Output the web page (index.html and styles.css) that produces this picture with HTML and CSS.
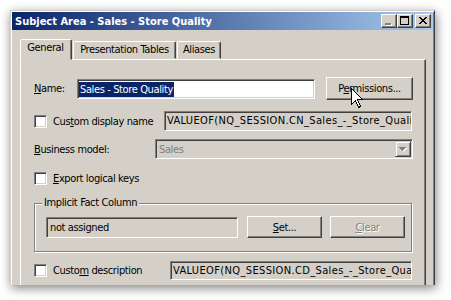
FILE: index.html
```html
<!DOCTYPE html>
<html lang="en">
<head>
  <meta charset="UTF-8">
  <title>Subject Area - Sales - Store Quality</title>
  <link rel="stylesheet" href="styles.css">
</head>
<body>
  <div class="window">
    <div class="titlebar">
      <span class="title">Subject Area - Sales - Store Quality</span>
      <div class="caption-buttons">
        <button class="cap-btn" aria-label="Minimize" disabled>
          <svg width="14" height="12" viewBox="0 0 14 12" shape-rendering="crispEdges">
            <rect x="4" y="9" width="6" height="2" fill="#fff"/>
            <rect x="3" y="8" width="6" height="2" fill="#808080"/>
          </svg>
        </button>
        <button class="cap-btn" aria-label="Maximize">
          <svg width="14" height="12" viewBox="0 0 14 12" shape-rendering="crispEdges">
            <rect x="2.5" y="1.5" width="8" height="8" fill="none" stroke="#000"/>
            <rect x="2" y="2" width="9" height="1" fill="#000"/>
          </svg>
        </button>
        <button class="cap-btn cap-close" aria-label="Close">
          <svg width="14" height="12" viewBox="0 0 14 12" shape-rendering="crispEdges">
            <path d="M3 2h2v1h1v1h2v-1h1v-1h2v1h-1v1h-1v1h-1v1h1v1h1v1h1v1h-2v-1h-1v-1h-2v1h-1v1h-2v-1h1v-1h1v-1h1v-1h-1v-1h-1v-1h-1z" fill="#000"/>
          </svg>
        </button>
      </div>
    </div>

    <div class="dialog-body">
      <div class="tabs">
        <div class="tab tab-general active">General</div>
        <div class="tab tab-tables">Presentation Tables</div>
        <div class="tab tab-aliases">Aliases</div>
      </div>

      <div class="panel">
        <div class="row row-name">
          <span class="label label-name"><u>N</u>ame:</span>
          <div class="field field-name"><span class="selection">Sales - Store Quality</span></div>
          <button class="btn btn-permissions">P<u>e</u>rmissions...</button>
        </div>

        <div class="row row-display">
          <div class="check check-display">
            <span class="checkbox"></span>
            <span>Cus<u>t</u>om display name</span>
          </div>
          <div class="field field-readonly field-value field-display">VALUEOF(NQ_SESSION.CN_Sales_-_Store_Quali</div>
        </div>

        <div class="row row-model">
          <span class="label label-model"><u>B</u>usiness model:</span>
          <div class="combo">
            <span class="combo-text">Sales</span>
            <span class="combo-button">
              <svg width="12" height="12" viewBox="0 0 12 12" shape-rendering="crispEdges">
                <path d="M3 5h7l-3.5 4z" fill="#fff"/>
                <path d="M2 4h7l-3.5 4z" fill="#808080"/>
              </svg>
            </span>
          </div>
        </div>

        <div class="row row-export">
          <div class="check">
            <span class="checkbox"></span>
            <span><u>E</u>xport logical keys</span>
          </div>
        </div>

        <div class="group">
          <span class="group-title">Implicit Fact Column</span>
          <div class="row row-fact">
            <div class="field field-readonly field-fact">not assigned</div>
            <button class="btn btn-set"><u>S</u>et...</button>
            <button class="btn btn-clear" disabled><u>C</u>lear</button>
          </div>
        </div>

        <div class="row row-description">
          <div class="check check-description">
            <span class="checkbox"></span>
            <span>Custo<u>m</u> description</span>
          </div>
          <div class="field field-readonly field-value field-description">VALUEOF(NQ_SESSION.CD_Sales_-_Store_Qua</div>
        </div>
      </div>
    </div>
  </div>

  <svg class="cursor" width="13" height="21" viewBox="0 0 13 21" shape-rendering="crispEdges">
    <path d="M0.5 0.5V16.5L4.5 12.5L7.5 19.5L9.5 18.5L6.5 11.5H11.5Z" fill="#fff" stroke="#000"/>
  </svg>
</body>
</html>
```

FILE: styles.css
```css
* {
  margin: 0;
  padding: 0;
  box-sizing: border-box;
}

body {
  width: 451px;
  height: 300px;
  overflow: hidden;
  padding: 10px 0 0 10px;
  background: #fff;
  color: #000;
  font-family: "DejaVu Sans Condensed", "Liberation Sans", sans-serif;
  font-size: 11px;
  letter-spacing: -0.38px;
  position: relative;
}

u {
  text-decoration: underline;
  text-underline-offset: 1px;
}

button {
  font: inherit;
  color: inherit;
  letter-spacing: inherit;
}

/* Window frame */
.window {
  width: 425px;
  height: 275px;
  overflow: hidden;
  background: #d4d0c8;
  border-style: solid;
  border-width: 1px 1px 0 1px;
  border-color: #d4d0c8 #404040 transparent #d4d0c8;
  padding: 1px 1px 0 1px;
  box-shadow: inset 1px 1px #fff, inset -1px 0 #808080, 1px 3px 10px rgba(0, 0, 0, 0.5);
}

.titlebar {
  height: 18px;
  display: flex;
  align-items: center;
  padding-left: 3px;
  background: linear-gradient(to right, #0a246a, #a6caf0);
  color: #fff;
  font-weight: bold;
  letter-spacing: 0;
}

.caption-buttons {
  display: flex;
  margin-left: auto;
  margin-right: 2px;
}

.cap-btn {
  width: 16px;
  height: 14px;
  display: grid;
  place-items: center;
  background: #d4d0c8;
  border: 1px solid;
  border-color: #fff #404040 #404040 #fff;
  box-shadow: inset -1px -1px #808080;
}

.cap-btn svg {
  display: block;
}

.cap-close {
  margin-left: 2px;
}

/* Tabs */
.dialog-body {
  padding: 9px 7px 0 8px;
}

.tabs {
  display: flex;
  align-items: flex-end;
  height: 20px;
  position: relative;
  z-index: 1;
}

.tab {
  height: 18px;
  line-height: 15px;
  text-align: center;
  margin-right: 1px;
  border: 1px solid;
  border-color: #fff #404040 transparent #fff;
  border-radius: 2px 2px 0 0;
  box-shadow: inset -1px 0 #808080;
}

.tab.active {
  height: 21px;
  margin-bottom: -1px;
  background: #d4d0c8;
  line-height: 16px;
  padding-right: 1px;
}

.tab-general { width: 52px; }
.tab-tables { width: 103px; }
.tab-aliases { width: 44px; }

.panel {
  height: 240px;
  border-style: solid;
  border-width: 1px 1px 0 1px;
  border-color: #fff #404040 transparent #fff;
  box-shadow: inset -1px 0 #808080;
  padding-left: 13px;
}

/* Rows */
.row {
  display: flex;
  align-items: center;
}

.row-name {
  margin-top: 17px;
  height: 23px;
}

.row-display {
  margin-top: 11px;
  height: 20px;
}

.row-model {
  margin-top: 8px;
  height: 20px;
}

.row-export {
  margin-top: 12px;
  height: 15px;
}

.row-description {
  margin-top: 8px;
  height: 20px;
}

.label-name { width: 43px; }
.label-model { width: 121px; }

.check {
  display: flex;
  align-items: center;
  gap: 6px;
}

.check-display { width: 130px; }
.check-description { width: 136px; }

.checkbox {
  width: 13px;
  height: 13px;
  background: #fff;
  border: 1px solid;
  border-color: #808080 #fff #fff #808080;
  box-shadow: inset 1px 1px #404040, inset -1px -1px #d4d0c8;
}

/* Edit fields */
.field {
  height: 20px;
  line-height: 16px;
  padding: 1px 3px;
  white-space: nowrap;
  overflow: hidden;
  background: #fff;
  border: 1px solid;
  border-color: #808080 #fff #fff #808080;
  box-shadow: inset 1px 1px #404040, inset -1px -1px #d4d0c8;
}

.field-readonly {
  background: #d4d0c8;
}

.field-value {
  letter-spacing: 0.36px;
  padding-left: 2px;
}

.field-name {
  width: 238px;
  padding-left: 1px;
  padding-top: 2px;
}

.selection {
  display: inline-block;
  line-height: 15px;
  padding: 0 1px;
  background: #0a246a;
  color: #fff;
}

.field-display { width: 248px; }
.field-description { width: 242px; height: 19px; line-height: 15px; }
.field-fact { width: 192px; height: 21px; line-height: 17px; }

.combo {
  width: 258px;
  height: 20px;
  display: flex;
  align-items: center;
  padding: 1px;
  background: #d4d0c8;
  border: 1px solid;
  border-color: #808080 #fff #fff #808080;
  box-shadow: inset 1px 1px #404040, inset -1px -1px #d4d0c8;
}

.combo-text {
  flex: 1;
  padding-left: 2px;
  color: #808080;
}

.combo-button {
  width: 16px;
  height: 16px;
  display: grid;
  place-items: center;
  border: 1px solid;
  border-color: #d4d0c8 #404040 #404040 #d4d0c8;
  box-shadow: inset 1px 1px #fff, inset -1px -1px #808080;
}

/* Push buttons */
.btn {
  height: 23px;
  background: #d4d0c8;
  border: 1px solid;
  border-color: #fff #404040 #404040 #fff;
  box-shadow: inset -1px -1px #808080;
}

.btn-permissions {
  width: 87px;
  margin-left: 11px;
}

.btn-set,
.btn-clear {
  width: 75px;
  height: 22px;
}

.btn-set { margin-left: 9px; }
.btn-clear { margin-left: 8px; }

.btn:disabled {
  color: #808080;
  text-shadow: 1px 1px #fff;
}

/* Group box */
.group {
  position: relative;
  width: 378px;
  height: 49px;
  margin-top: 17px;
  padding: 12px 0 0 11px;
  border: 1px solid #808080;
  box-shadow: inset 1px 1px #fff, 1px 1px #fff;
}

.group-title {
  position: absolute;
  top: -8px;
  left: 7px;
  padding: 0 2px;
  background: #d4d0c8;
  line-height: 14px;
}

.row-fact {
  height: 22px;
}

.cursor {
  position: absolute;
  left: 351px;
  top: 88px;
}
```
